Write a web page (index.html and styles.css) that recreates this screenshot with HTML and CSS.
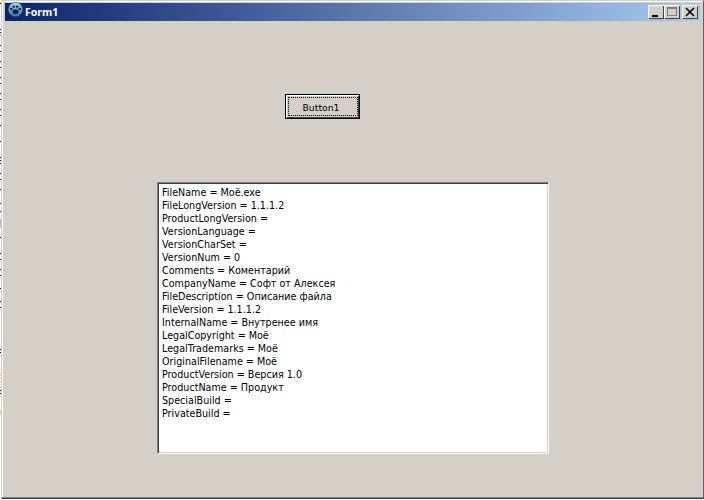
FILE: index.html
```html
<!DOCTYPE html>
<html lang="ru">
<head>
<meta charset="utf-8">
<title>Form1</title>
<link rel="stylesheet" href="styles.css">
</head>
<body>
<svg class="desktop-edge" width="1" height="500" viewBox="0 0 1 500">
  <path fill="#000" d="M0 3h1v1H0z M0 390h1v1H0z M0 393h1v1H0z"/>
  <path fill="#0000c8" d="M0 29h1v1H0z M0 32h1v1H0z M0 45h1v1H0z M0 51h1v1H0z M0 61h1v1H0z M0 67h1v1H0z M0 77h1v1H0z M0 83h1v1H0z M0 93h1v1H0z M0 99h1v1H0z M0 109h1v1H0z M0 115h1v1H0z M0 125h1v1H0z M0 141h1v1H0z M0 157h1v1H0z M0 160h1v1H0z M0 163h1v1H0z M0 173h1v1H0z M0 179h1v1H0z M0 189h1v1H0z M0 203h1v1H0z M0 211h1v1H0z M0 237h1v1H0z M0 253h1v1H0z M0 259h1v1H0z M0 269h1v1H0z M0 275h1v1H0z M0 288h1v1H0z M0 301h1v1H0z M0 307h1v1H0z M0 349h1v1H0z M0 352h1v1H0z"/>
  <path fill="#b0b0f0" d="M0 34h1v2H0z M0 219h1v9H0z M0 291h1v1H0z M0 355h1v1H0z"/>
  <path fill="#d4d0c8" d="M0 369h1v1H0z M0 372h1v1H0z M0 375h1v1H0z M0 378h1v1H0z M0 381h1v1H0z M0 384h1v1H0z M0 387h1v1H0z M0 396h1v1H0z M0 410h1v5H0z"/>
</svg>
<div class="window">
  <header class="titlebar">
    <svg class="app-icon" width="15" height="15" viewBox="0 0 15 15">
      <defs>
        <linearGradient id="orb" x1="0" y1="0" x2="0" y2="1">
          <stop offset="0" stop-color="#c8d8e4"/>
          <stop offset="0.5" stop-color="#5fa6d6"/>
          <stop offset="1" stop-color="#2f7fbe"/>
        </linearGradient>
      </defs>
      <circle cx="7.5" cy="7.5" r="7.2" fill="url(#orb)" stroke="#23406e" stroke-width="0.6"/>
      <ellipse cx="7.5" cy="9.8" rx="3" ry="2.4" fill="#0c1430"/>
      <circle cx="3.3" cy="7" r="1.2" fill="#0c1430"/>
      <circle cx="5.8" cy="4.6" r="1.2" fill="#0c1430"/>
      <circle cx="9.2" cy="4.6" r="1.2" fill="#0c1430"/>
      <circle cx="11.7" cy="7" r="1.2" fill="#0c1430"/>
    </svg>
    <span class="title">Form1</span>
    <div class="controls">
      <button class="ctl"><svg width="16" height="14" viewBox="0 0 16 14"><path d="M4 10h6v2H4z" fill="#000"/></svg></button>
      <button class="ctl"><svg width="16" height="14" viewBox="0 0 16 14"><path d="M3 2h10v9H3z M4 4v6h8V4z" fill="#808080" fill-rule="evenodd"/></svg></button>
      <button class="ctl close"><svg width="16" height="14" viewBox="0 0 16 14"><path d="M4 3l8 8M12 3l-8 8" stroke="#000" stroke-width="1.6" fill="none"/></svg></button>
    </div>
  </header>
  <main class="client">
    <button class="btn"><span class="btn-focus">Button1</span></button>
    <div class="memo">
      <div>FileName = Моё.exe</div>
      <div>FileLongVersion = 1.1.1.2</div>
      <div>ProductLongVersion =</div>
      <div>VersionLanguage =</div>
      <div>VersionCharSet =</div>
      <div>VersionNum = 0</div>
      <div>Comments = Коментарий</div>
      <div>CompanyName = Софт от Алексея</div>
      <div>FileDescription = Описание файла</div>
      <div>FileVersion = 1.1.1.2</div>
      <div>InternalName = Внутренее имя</div>
      <div>LegalCopyright = Моё</div>
      <div>LegalTrademarks = Моё</div>
      <div>OriginalFilename = Моё</div>
      <div>ProductVersion = Версия 1.0</div>
      <div>ProductName = Продукт</div>
      <div>SpecialBuild =</div>
      <div>PrivateBuild =</div>
    </div>
  </main>
</div>
</body>
</html>
```
FILE: styles.css
```css
html, body { margin: 0; height: 100%; background: #fff; overflow: hidden; }
body { display: flex; align-items: flex-start; }
.desktop-edge { display: block; flex: none; }
.window {
  box-sizing: border-box; width: 703px; height: 499px; flex: none;
  background: #d4d0c8; padding: 2px 3px 3px 3px;
  border-top: 1px solid #d4d0c8; border-left: 1px solid #d4d0c8;
  border-right: 1px solid #606060; border-bottom: 1px solid #404040;
  box-shadow: inset 0 -1px #808080, inset 1px 0 #fff, inset 0 1px #fff;
  display: flex; flex-direction: column;
  font-family: "DejaVu Sans", sans-serif;
}
.titlebar {
  height: 18px; flex: none; display: flex; align-items: center; padding: 0 2px 0 3px;
  background: linear-gradient(90deg, #0a246a, #a6caf0);
}
.app-icon { flex: none; margin-top: -5px; }
.title { margin-left: 2px; color: #fff; font: bold 10.5px "Noto Sans", sans-serif; }
.controls { margin-left: auto; display: flex; }
.ctl {
  box-sizing: border-box; width: 16px; height: 14px; padding: 0; background: #d4d0c8;
  border: 0; box-shadow: inset 1px 1px #fff, inset -1px -1px #404040; display: block;
}
.ctl svg { display: block; }
.close { margin-left: 2px; }
.client { flex: 1; display: flex; flex-direction: column; align-items: flex-start; }
.btn {
  box-sizing: border-box; width: 75px; height: 25px; margin: 73px 0 0 280px; padding: 2px 1px 2px 2px;
  background: #d4d0c8; border: 1px solid #000; box-shadow: inset 1px 1px #fff, inset -1px -1px #404040;
  font: 9.3px "DejaVu Sans", sans-serif; color: #000;
}
.btn-focus { display: block; height: 19px; line-height: 19px; padding-right: 4px; box-sizing: border-box; border: 1px dotted #000; }
.memo {
  box-sizing: border-box; width: 392px; height: 272px; margin: 63px 0 0 152px; padding: 3px 4px;
  background: #fff; border: 1px solid; border-color: #808080 #fff #fff #808080;
  box-shadow: inset 1px 1px #404040, inset -1px -1px #d4d0c8;
  font: 9.6px/13px "DejaVu Sans", sans-serif; color: #000;
}
```
